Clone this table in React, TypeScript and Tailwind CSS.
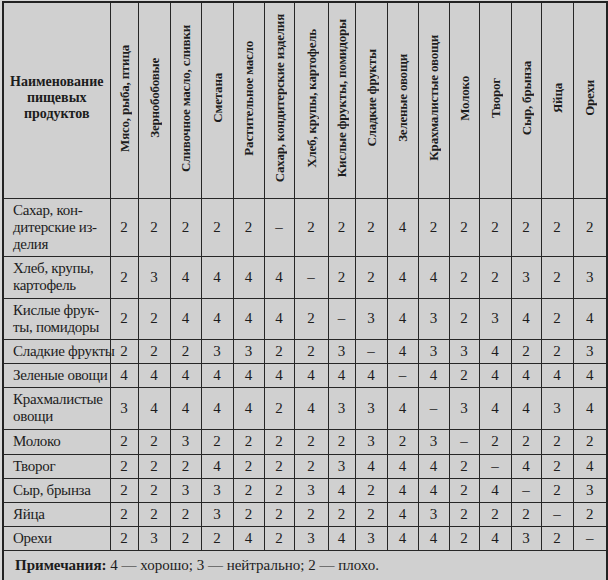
const columns = [
  { name: 'Мясо, рыба, птица', w: 'w-[28px]' },
  { name: 'Зернобобовые', w: 'w-[32px]' },
  { name: 'Сливочное масло, сливки', w: 'w-[31px]' },
  { name: 'Сметана', w: 'w-[32px]' },
  { name: 'Растительное масло', w: 'w-[31px]' },
  { name: 'Сахар, кондитерские изделия', w: 'w-[30px]' },
  { name: 'Хлеб, крупы, картофель', w: 'w-[34px]' },
  { name: 'Кислые фрукты, помидоры', w: 'w-[27px]' },
  { name: 'Сладкие фрукты', w: 'w-[32px]' },
  { name: 'Зеленые овощи', w: 'w-[31px]' },
  { name: 'Крахмалистые овощи', w: 'w-[31px]' },
  { name: 'Молоко', w: 'w-[30px]' },
  { name: 'Творог', w: 'w-[32px]' },
  { name: 'Сыр, брынза', w: 'w-[30px]' },
  { name: 'Яйца', w: 'w-[32px]' },
  { name: 'Орехи', w: 'w-[34px]' },
]

interface Row {
  lines: string[]
  h: string
  values: string
}

// 4 — хорошо, 3 — нейтрально, 2 — плохо, "-" на диагонали
const rows: Row[] = [
  { lines: ['Сахар, кон-', 'дитерские из-', 'делия'], h: 'h-[58px]', values: '22222-2224222222' },
  { lines: ['Хлеб, крупы,', 'картофель'], h: 'h-[42px]', values: '234444-224422323' },
  { lines: ['Кислые фрук-', 'ты, помидоры'], h: 'h-[41px]', values: '2244442-34323424' },
  { lines: ['Сладкие фрукты'], h: 'h-[24px]', values: '22233223-4334223' },
  { lines: ['Зеленые овощи'], h: 'h-[24px]', values: '444444444-424444' },
  { lines: ['Крахмалистые', 'овощи'], h: 'h-[42px]', values: '3444424334-34434' },
  { lines: ['Молоко'], h: 'h-[25px]', values: '22322222323-2222' },
  { lines: ['Творог'], h: 'h-[24px]', values: '222422234442-424' },
  { lines: ['Сыр, брынза'], h: 'h-[24px]', values: '2233223424424-23' },
  { lines: ['Яйца'], h: 'h-[24px]', values: '22232222243222-2' },
  { lines: ['Орехи'], h: 'h-[24px]', values: '232242343442432-' },
]

const cell = 'border-[1.5px] border-[#262626]'

export default function App() {
  return (
    <div className="w-[608px] h-[580px] bg-[#d8d8d8] pt-[1px] pl-[2px] font-['Liberation_Serif',serif] text-[#1c1c1c]">
      <table className="table-fixed border-collapse border-2 border-[#222] bg-[#d0d0d0] w-[604px]">
        <colgroup>
          <col className="w-[107px]" />
          {columns.map((c) => (
            <col key={c.name} className={c.w} />
          ))}
        </colgroup>
        <thead>
          <tr>
            <th className={`${cell} h-[196px] p-0 align-middle`}>
              <div className="text-[14px] font-bold leading-[16px] text-center -mt-[4px]">
                Наименование
                <br />
                пищевых
                <br />
                продуктов
              </div>
            </th>
            {columns.map((c) => (
              <th key={c.name} className={`${cell} p-0 align-middle`}>
                <div className="flex items-center justify-center -mt-[4px]">
                  <span className="[writing-mode:vertical-rl] rotate-180 whitespace-nowrap text-[13px] font-bold leading-[15px] tracking-[-0.2px]">
                    {c.name}
                  </span>
                </div>
              </th>
            ))}
          </tr>
        </thead>
        <tbody>
          {rows.map((r) => (
            <tr key={r.lines[0]}>
              <td className={`${cell} ${r.h} pl-[9px] pr-0 py-0 align-middle text-[15px] leading-[17px] tracking-[-0.3px] whitespace-nowrap`}>
                {r.lines.map((l) => (
                  <div key={l}>{l}</div>
                ))}
              </td>
              {r.values.split('').map((v, i) => (
                <td key={i} className={`${cell} p-0 text-center align-middle text-[15px] leading-[17px]`}>
                  {v === '-' ? '–' : v}
                </td>
              ))}
            </tr>
          ))}
          <tr>
            <td colSpan={17} className={`${cell} h-[31px] pl-[11px] py-0 align-middle text-[15px] leading-[17px]`}>
              <span className="font-bold">Примечания:</span> 4 — хорошо; 3 — нейтрально; 2 — плохо.
            </td>
          </tr>
        </tbody>
      </table>
    </div>
  )
}
